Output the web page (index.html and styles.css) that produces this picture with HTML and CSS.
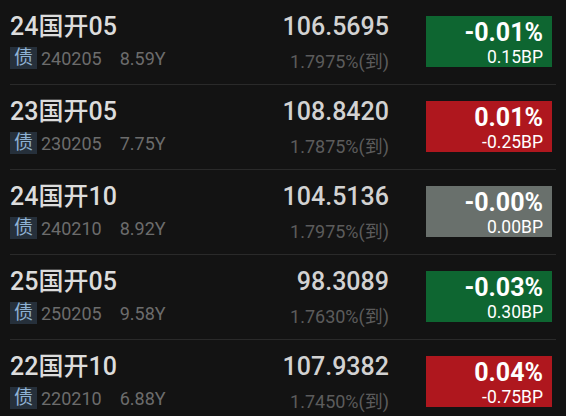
FILE: index.html
```html
<!DOCTYPE html>
<html lang="zh-CN">
<head>
    <meta charset="UTF-8">
    <meta name="viewport" content="width=device-width, initial-scale=1.0">
    <title>国开债行情</title>
    <link rel="stylesheet" href="styles.css">
</head>

<body>
    <div class="list">
        <div class="row">
            <div class="name">
                <div class="title">24国开05</div>
                <div class="meta"><span class="tag">债</span><span class="code">240205</span><span class="term">8.59Y</span></div>
            </div>
            <div class="quote">
                <div class="price">106.5695</div>
                <div class="yield">1.7975%(到)</div>
            </div>
            <div class="chg down">
                <div class="pct">-0.01%</div>
                <div class="bp">0.15BP</div>
            </div>
        </div>

        <div class="row">
            <div class="name">
                <div class="title">23国开05</div>
                <div class="meta"><span class="tag">债</span><span class="code">230205</span><span class="term">7.75Y</span></div>
            </div>
            <div class="quote">
                <div class="price">108.8420</div>
                <div class="yield">1.7875%(到)</div>
            </div>
            <div class="chg up">
                <div class="pct">0.01%</div>
                <div class="bp">-0.25BP</div>
            </div>
        </div>

        <div class="row">
            <div class="name">
                <div class="title">24国开10</div>
                <div class="meta"><span class="tag">债</span><span class="code">240210</span><span class="term">8.92Y</span></div>
            </div>
            <div class="quote">
                <div class="price">104.5136</div>
                <div class="yield">1.7975%(到)</div>
            </div>
            <div class="chg flat">
                <div class="pct">-0.00%</div>
                <div class="bp">0.00BP</div>
            </div>
        </div>

        <div class="row">
            <div class="name">
                <div class="title">25国开05</div>
                <div class="meta"><span class="tag">债</span><span class="code">250205</span><span class="term">9.58Y</span></div>
            </div>
            <div class="quote">
                <div class="price">98.3089</div>
                <div class="yield">1.7630%(到)</div>
            </div>
            <div class="chg down">
                <div class="pct">-0.03%</div>
                <div class="bp">0.30BP</div>
            </div>
        </div>

        <div class="row">
            <div class="name">
                <div class="title">22国开10</div>
                <div class="meta"><span class="tag">债</span><span class="code">220210</span><span class="term">6.88Y</span></div>
            </div>
            <div class="quote">
                <div class="price">107.9382</div>
                <div class="yield">1.7450%(到)</div>
            </div>
            <div class="chg up">
                <div class="pct">0.04%</div>
                <div class="bp">-0.75BP</div>
            </div>
        </div>
    </div>
</body>
</html>
```

FILE: styles.css
```css
* {
    box-sizing: border-box;
}
body {
    margin: 0;
    background: #131313;
    font-family: Roboto, "Noto Sans CJK SC", sans-serif;
    overflow: hidden;
}
.list {
    margin: 0 10px 0 10px;
}
.row {
    display: flex;
    align-items: flex-start;
    height: 85px;
    padding: 0 4px 0 0;
    border-bottom: 1px solid #2a2a2a;
}
.name {
    flex: 1;
    padding-top: 12px;
}
.title {
    font-size: 25px;
    font-weight: 500;
    line-height: 30px;
    color: #dcdcdc;
    height: 30px;
}
.meta {
    display: flex;
    align-items: center;
    margin-top: 5px;
    height: 22px;
}
.tag {
    display: inline-block;
    width: 27px;
    height: 22px;
    line-height: 22px;
    text-align: center;
    font-size: 19px;
    background: #26303b;
    color: #8fb2d4;
    margin-right: 4px;
}
.code, .term {
    font-size: 18px;
    color: #6c6c6c;
}
.term {
    margin-left: 18px;
}
.quote {
    text-align: right;
    margin-right: 37px;
    padding-top: 12px;
}
.price {
    font-size: 25px;
    font-weight: 500;
    line-height: 30px;
    height: 30px;
    color: #d2d2d2;
}
.yield {
    font-size: 18px;
    line-height: 22px;
    margin-top: 9px;
    color: #5c5c5c;
}
.chg {
    width: 126px;
    height: 51px;
    margin-top: 16px;
    padding: 3px 9px 0 0;
    text-align: right;
    color: #fff;
}
.pct {
    font-size: 25px;
    font-weight: bold;
    line-height: 27px;
}
.bp {
    font-size: 17.5px;
    line-height: 20px;
    margin-top: 1px;
}
.down {
    background: #0e6631;
}
.up {
    background: #af171e;
}
.flat {
    background: #69706c;
}
```
